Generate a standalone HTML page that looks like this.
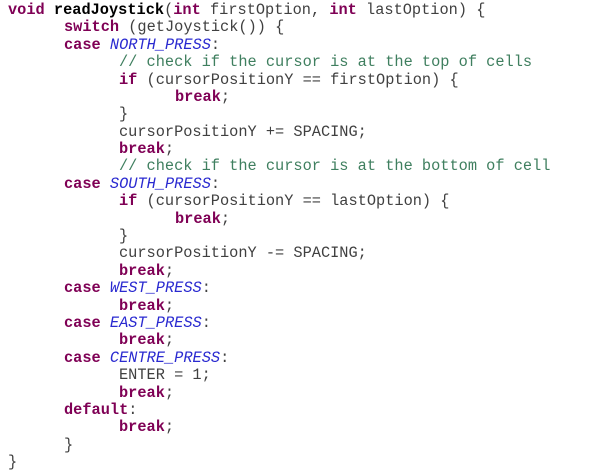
<!DOCTYPE html>
<html><head><style>
body{margin:0;background:#fff;}
.c{position:absolute;left:0;top:0;font-family:"Liberation Mono",monospace;font-size:15.3px;color:#404040;}
.l{position:absolute;white-space:pre;line-height:17px;}
.k{color:#7f0055;font-weight:bold}
.b{color:#000;font-weight:bold}
.i{color:#2a2ad0;font-style:italic}
.m{color:#3f7f5f}
</style></head><body><div class="c">
<div class="l" style="left:8px;top:2px"><span class="k">void</span> <span class="b">readJoystick</span>(<span class="k">int</span> firstOption, <span class="k">int</span> lastOption) {</div>
<div class="l" style="left:64px;top:19px"><span class="k">switch</span> (getJoystick()) {</div>
<div class="l" style="left:64px;top:37px"><span class="k">case</span> <span class="i">NORTH_PRESS</span>:</div>
<div class="l" style="left:119px;top:54px"><span class="m">// check if the cursor is at the top of cells</span></div>
<div class="l" style="left:119px;top:72px"><span class="k">if</span> (cursorPositionY == firstOption) {</div>
<div class="l" style="left:175px;top:89px"><span class="k">break</span>;</div>
<div class="l" style="left:119px;top:106px">}</div>
<div class="l" style="left:119px;top:124px">cursorPositionY += SPACING;</div>
<div class="l" style="left:119px;top:141px"><span class="k">break</span>;</div>
<div class="l" style="left:119px;top:158px"><span class="m">// check if the cursor is at the bottom of cell</span></div>
<div class="l" style="left:64px;top:176px"><span class="k">case</span> <span class="i">SOUTH_PRESS</span>:</div>
<div class="l" style="left:119px;top:193px"><span class="k">if</span> (cursorPositionY == lastOption) {</div>
<div class="l" style="left:175px;top:211px"><span class="k">break</span>;</div>
<div class="l" style="left:119px;top:228px">}</div>
<div class="l" style="left:119px;top:245px">cursorPositionY -= SPACING;</div>
<div class="l" style="left:119px;top:263px"><span class="k">break</span>;</div>
<div class="l" style="left:64px;top:280px"><span class="k">case</span> <span class="i">WEST_PRESS</span>:</div>
<div class="l" style="left:119px;top:298px"><span class="k">break</span>;</div>
<div class="l" style="left:64px;top:315px"><span class="k">case</span> <span class="i">EAST_PRESS</span>:</div>
<div class="l" style="left:119px;top:332px"><span class="k">break</span>;</div>
<div class="l" style="left:64px;top:350px"><span class="k">case</span> <span class="i">CENTRE_PRESS</span>:</div>
<div class="l" style="left:119px;top:367px">ENTER = 1;</div>
<div class="l" style="left:119px;top:385px"><span class="k">break</span>;</div>
<div class="l" style="left:64px;top:402px"><span class="k">default</span>:</div>
<div class="l" style="left:119px;top:419px"><span class="k">break</span>;</div>
<div class="l" style="left:64px;top:437px">}</div>
<div class="l" style="left:8px;top:454px">}</div>
</div></body></html>
